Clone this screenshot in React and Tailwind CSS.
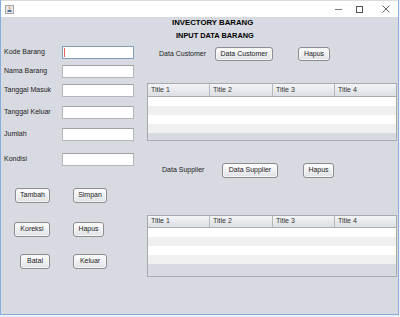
import React from "react";

const F = { fontFamily: '"Liberation Sans", Arial, sans-serif' };

function Btn({ children, w, h = "h-[15px]" }) {
  return (
    <div
      className={`${w} ${h} flex items-center justify-center rounded-[3px] border border-[#8c8d90] bg-gradient-to-b from-[#ffffff] to-[#dfe1e5] text-[7px] text-[#222] shadow-[inset_0_0_0_1px_#f6f6f6]`}
    >
      {children}
    </div>
  );
}

function Field({ label, focus }) {
  return (
    <div className="flex h-[13px] items-center">
      <div className="w-[61px] pl-[3px] text-[7px] text-[#222] whitespace-nowrap">{label}</div>
      <div
        className={`w-[72px] h-[13px] bg-white border ${
          focus ? "border-[#7f9db9]" : "border-[#b4b6ba] border-t-[#a0a2a6]"
        } flex items-center`}
      >
        {focus && <div className="ml-[1px] w-[1px] h-[9px] bg-[#e06060]" />}
      </div>
    </div>
  );
}

function Table({ headH, emptyH }) {
  const cols = ["Title 1", "Title 2", "Title 3", "Title 4"];
  const widths = ["w-[62px]", "w-[63px]", "w-[62px]", "flex-1"];
  return (
    <div className="w-[250px] border border-[#a6a9ae] bg-[#d7dae0] flex flex-col">
      <div className={`${headH} flex bg-gradient-to-b from-[#f3f4f6] to-[#dcdfe3] border-b border-[#a9acb0]`}>
        {cols.map((c, i) => (
          <div
            key={c}
            className={`${widths[i]} ${i < 3 ? "border-r border-[#b5b8bc]" : ""} flex items-center pl-[3px] text-[7px] text-[#333]`}
          >
            {c}
          </div>
        ))}
      </div>
      <div className="h-[9px] bg-white" />
      <div className="h-[9px] bg-[#f0f0f0]" />
      <div className="h-[9px] bg-white" />
      <div className="h-[9px] bg-[#f0f0f0]" />
      <div className={`${emptyH} bg-[#d7dae0]`} />
    </div>
  );
}

export default function App() {
  return (
    <div className="w-[400px] h-[317px] overflow-hidden bg-[#eef0f3]" style={F}>
      <div className="w-[399px] h-[315px] flex flex-col border-l border-r border-b border-[#88aee0] bg-[#d7dae0]">
        {/* title bar */}
        <div className="h-[17px] bg-white flex items-center border-t border-[#dcdcdc]">
          <div className="ml-[4px] w-[9px] h-[9px] border border-[#a8a8a8] bg-[#e8e8e8] flex items-end justify-center">
            <svg width="7" height="7" viewBox="0 0 7 7">
              <path d="M3.5 0.5 C2.5 1.8 4.5 2.2 3.3 3.5" stroke="#e07020" strokeWidth="0.9" fill="none" />
              <rect x="1.5" y="4" width="4" height="2" fill="#5070a0" />
            </svg>
          </div>
          <div className="flex-1" />
          <div className="w-[7px] h-[1px] bg-[#777] mr-[14px] mt-[1px]" />
          <div className="w-[7px] h-[7px] border border-[#555] mr-[19px]" />
          <svg width="8" height="8" viewBox="0 0 8 8" className="mr-[8px]">
            <path d="M0.5 0.5 L7.5 7.5 M7.5 0.5 L0.5 7.5" stroke="#555" strokeWidth="0.9" />
          </svg>
        </div>
        {/* headings */}
        <div className="h-[11px] leading-[11px] pl-[171px] text-[7.8px] font-bold text-black whitespace-nowrap">
          INVECTORY BARANG
        </div>
        <div className="mt-[3px] h-[10px] leading-[10px] pl-[175px] text-[7.4px] font-bold text-black whitespace-nowrap">
          INPUT DATA BARANG
        </div>
        {/* body */}
        <div className="flex">
          {/* left column */}
          <div className="w-[146px] flex flex-col">
            <div className="mt-[5px]"><Field label="Kode Barang" focus /></div>
            <div className="mt-[6px]"><Field label="Nama Barang" /></div>
            <div className="mt-[6px]"><Field label="Tanggal Masuk" /></div>
            <div className="mt-[9px]"><Field label="Tanggal Keluar" /></div>
            <div className="mt-[9px]"><Field label="Jumlah" /></div>
            <div className="mt-[12px]"><Field label="Kondisi" /></div>
            <div className="mt-[22px] grid grid-cols-[49px_40px] gap-x-[23px] justify-items-start">
              <div className="justify-self-end"><Btn w="w-[35px]">Tambah</Btn></div>
              <Btn w="w-[34px]">Simpan</Btn>
              <div className="justify-self-end mt-[19px]"><Btn w="w-[36px]">Koreksi</Btn></div>
              <div className="mt-[19px]"><Btn w="w-[31px]">Hapus</Btn></div>
              <div className="justify-self-end mt-[17px]"><Btn w="w-[30px]">Batal</Btn></div>
              <div className="mt-[17px]"><Btn w="w-[34px]">Keluar</Btn></div>
            </div>
          </div>
          {/* right column */}
          <div className="flex flex-col">
            <div className="mt-[6px] flex items-center h-[14px]">
              <div className="ml-[12px] w-[56px] text-[7px] text-[#222] whitespace-nowrap">Data Customer</div>
              <Btn w="w-[58px]" h="h-[14px]">Data Customer</Btn>
              <div className="ml-[25px]"><Btn w="w-[32px]" h="h-[14px]">Hapus</Btn></div>
            </div>
            <div className="mt-[22px]">
              <Table headH="h-[13px]" emptyH="h-[7px]" />
            </div>
            <div className="mt-[22px] flex items-center h-[15px]">
              <div className="ml-[15px] w-[60px] text-[7px] text-[#222] whitespace-nowrap">Data Supplier</div>
              <Btn w="w-[56px]">Data Supplier</Btn>
              <div className="ml-[25px]"><Btn w="w-[31px]">Hapus</Btn></div>
            </div>
            <div className="mt-[37px]">
              <Table headH="h-[12px]" emptyH="h-[12px]" />
            </div>
          </div>
        </div>
      </div>
    </div>
  );
}
